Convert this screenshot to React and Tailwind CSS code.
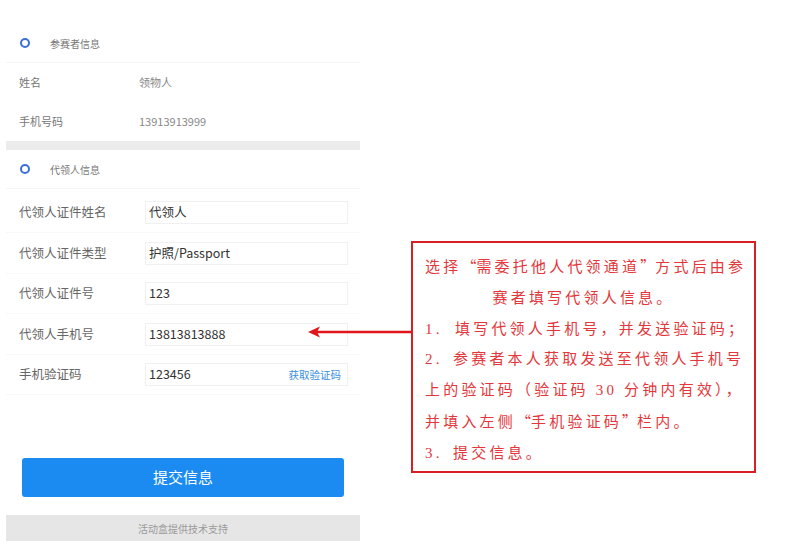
import { useState } from 'react'

const SANS = { fontFamily: '"Noto Sans CJK SC", "Noto Sans", sans-serif' }
const SERIF = { fontFamily: '"Liberation Serif", "Noto Sans CJK SC", serif' }

const FIELDS = [
  { label: '代领人证件姓名', value: '代领人', h: 'h-[40px]' },
  { label: '代领人证件类型', value: '护照/Passport', h: 'h-[41px]' },
  { label: '代领人证件号', value: '123', h: 'h-[40px]' },
  { label: '代领人手机号', value: '13813813888', h: 'h-[41px]' },
  { label: '手机验证码', value: '123456', h: 'h-[40px]', code: true },
]

function Ring() {
  return <span className="w-[10px] h-[10px] rounded-full border-[2.5px] border-[#3b6fd9] shrink-0" />
}

function SectionHead({ title }) {
  return (
    <div className="h-[39px] flex items-center pl-[14px] gap-[20px] border-b border-[#f5f5f5]">
      <Ring />
      <span className="text-[10px] text-[#777]">{title}</span>
    </div>
  )
}

function Q({ children }) {
  return <span style={SANS} className="tracking-normal">{children}</span>
}

export default function App() {
  const [values] = useState(FIELDS)

  return (
    <div className="relative w-[800px] h-[550px] bg-white flex overflow-hidden" style={SANS}>
      {/* phone screenshot */}
      <div className="ml-[6px] w-[354px] flex flex-col pt-[24px]">
        <SectionHead title="参赛者信息" />
        <div className="h-[39px] flex items-center pl-[13px]">
          <span className="w-[120px] text-[11px] text-[#777]">姓名</span>
          <span className="text-[11px] text-[#888]">领物人</span>
        </div>
        <div className="h-[39px] flex items-center pl-[13px]">
          <span className="w-[120px] text-[11px] text-[#777]">手机号码</span>
          <span className="text-[11px] text-[#888]">13913913999</span>
        </div>
        <div className="h-[9px] bg-[#ececec]" />
        <SectionHead title="代领人信息" />
        <div className="pt-[4px]">
          {values.map(f => (
            <div key={f.label} className={`${f.h} flex items-center pl-[13px] border-b border-[#f8f8f8]`}>
              <span className="w-[126px] text-[12.5px] text-[#666]">{f.label}</span>
              <div className="w-[203px] h-[23px] border border-[#f0f0f0] flex items-center justify-between pl-[3px] pr-[6px]">
                <span className="text-[12.5px] text-[#333]">{f.value}</span>
                {f.code && <span className="text-[10.5px] text-[#3b8fe0]">获取验证码</span>}
              </div>
            </div>
          ))}
        </div>
        <div className="flex-1" />
        <div className="px-[16px]">
          <button className="w-[322px] h-[39px] rounded-[3px] bg-[#1b8bf2] text-white text-[15px]">提交信息</button>
        </div>
        <div className="h-[18px]" />
        <div className="h-[26px] bg-[#e6e6e6] flex items-center justify-center text-[10px] text-[#9a9a9a]">
          活动盒提供技术支持
        </div>
        <div className="h-[9px]" />
      </div>

      {/* annotation */}
      <div className="ml-[51px] mt-[241px] w-[345px] h-[232px] border-2 border-[#d81f24] pl-[12px] pt-[8px] text-[#e3373b] text-[15px] tracking-[3.2px] leading-[30.8px]" style={SERIF}>
        <div className="whitespace-nowrap">选择<Q>“</Q>需委托他人代领通道<Q>”</Q>方式后由参</div>
        <div className="whitespace-nowrap text-center pr-[12px]">赛者填写代领人信息。</div>
        <div className="whitespace-nowrap flex"><span className="w-[30px] shrink-0">1.</span>填写代领人手机号，并发送验证码；</div>
        <div className="whitespace-nowrap flex"><span className="w-[28px] shrink-0">2.</span>参赛者本人获取发送至代领人手机号</div>
        <div className="whitespace-nowrap">上的验证码（验证码 30 分钟内有效），</div>
        <div className="whitespace-nowrap">并填入左侧<Q>“</Q>手机验证码<Q>”</Q>栏内。</div>
        <div className="whitespace-nowrap flex"><span className="w-[28px] shrink-0">3.</span>提交信息。</div>
      </div>

      {/* arrow */}
      <svg className="absolute left-[306px] top-[324px]" width="106" height="16" viewBox="0 0 106 16">
        <line x1="8" y1="8" x2="106" y2="8" stroke="#e0161c" strokeWidth="2.5" />
        <path d="M2 8 L14 2.5 L11 8 L14 13.5 Z" fill="#e0161c" />
      </svg>
    </div>
  )
}
